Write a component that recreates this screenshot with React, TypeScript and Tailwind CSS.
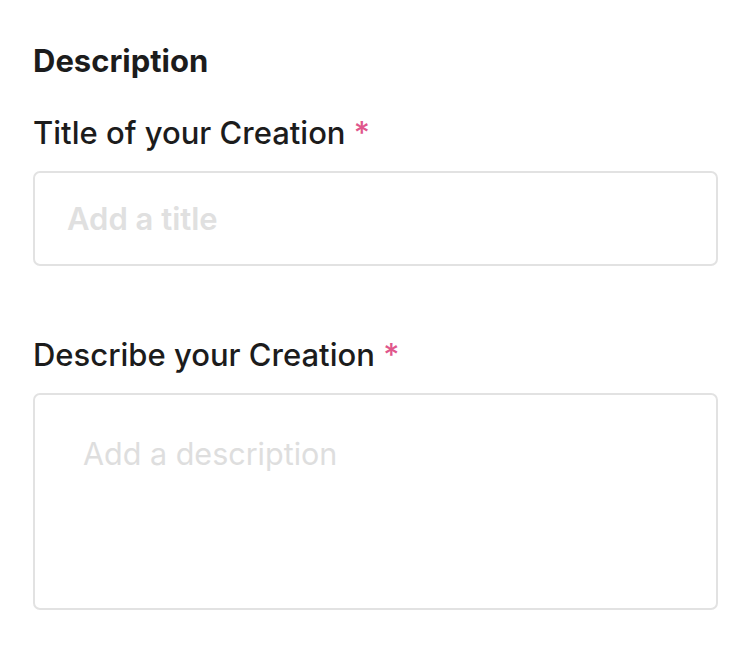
import React from "react";

export default function App() {
  return (
    <div className="w-[750px] h-[659px] bg-white px-[33px] pt-[42px] font-['Inter',sans-serif] text-[#1c1c1c]">
      <h2 className="text-[31px] leading-[38px] font-bold">Description</h2>
      <label className="block mt-[34px] text-[31px] leading-[38px] font-medium">
        Title of your Creation <span className="text-[#e0578c]">*</span>
      </label>
      <div className="mt-[19px] h-[95px] w-[685px] rounded-[7px] border-2 border-[#e2e2e2] flex items-center px-[32px]">
        <span className="text-[31px] leading-[38px] font-semibold text-[#e0e0e0]">Add a title</span>
      </div>
      <label className="block mt-[70px] text-[31px] leading-[38px] font-medium">
        Describe your Creation <span className="text-[#e0578c]">*</span>
      </label>
      <div className="mt-[19px] h-[217px] w-[685px] rounded-[7px] border-2 border-[#e2e2e2] px-[48px] pt-[40px]">
        <span className="block text-[30.5px] leading-[38px] font-normal text-[#dedede]">Add a description</span>
      </div>
    </div>
  );
}
